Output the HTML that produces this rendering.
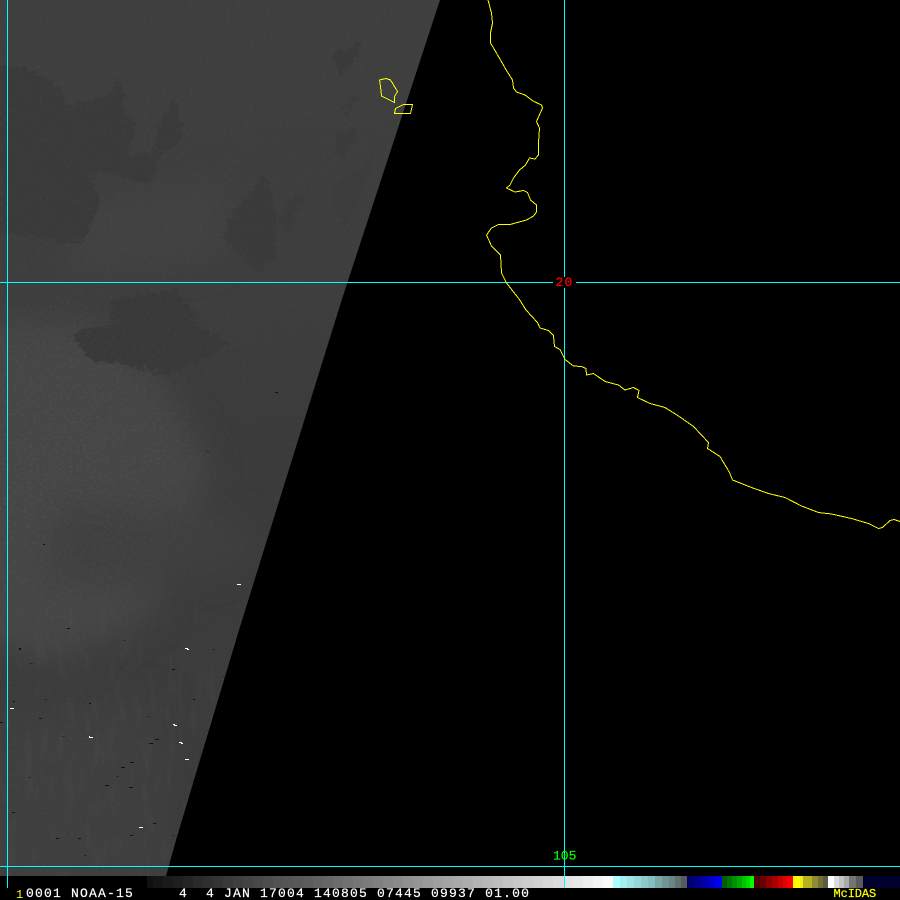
<!DOCTYPE html>
<html lang="en">
<head>
<meta charset="utf-8">
<title>NOAA-15 McIDAS image</title>
<style>
html,body{margin:0;padding:0;width:900px;height:900px;background:#000;overflow:hidden}
svg{display:block}
text{font-family:"Liberation Mono",monospace;white-space:pre}
</style>
</head>
<body>
<svg width="900" height="900" viewBox="0 0 900 900" xmlns="http://www.w3.org/2000/svg">
<defs>
<clipPath id="sw"><polygon points="0,0 440,0 341.7,300 239,630 176,840 166,876 0,876"/></clipPath>
<linearGradient id="base" x1="0" y1="0" x2="0" y2="1">
<stop offset="0" stop-color="#3f3f3f"/><stop offset=".3" stop-color="#3e3e3e"/><stop offset=".5" stop-color="#3b3b3b"/><stop offset="1" stop-color="#3c3c3c"/>
</linearGradient>
<linearGradient id="fadeY" x1="0" y1="0" x2="0" y2="1">
<stop offset="0" stop-color="#000"/><stop offset=".3" stop-color="#fff"/><stop offset="1" stop-color="#fff"/>
</linearGradient>
<radialGradient id="fadeR" cx=".25" cy=".5" r=".7">
<stop offset="0" stop-color="#fff"/><stop offset="1" stop-color="#000"/>
</radialGradient>
<mask id="mY" maskUnits="userSpaceOnUse" x="0" y="560" width="260" height="320"><rect x="0" y="560" width="260" height="320" fill="url(#fadeY)"/></mask>
<mask id="mR" maskUnits="userSpaceOnUse" x="0" y="280" width="280" height="360"><rect x="0" y="280" width="280" height="360" fill="url(#fadeR)"/></mask>
<filter id="rough" x="-5%" y="-5%" width="110%" height="110%" color-interpolation-filters="sRGB">
<feTurbulence type="fractalNoise" baseFrequency="0.14 0.22" numOctaves="3" seed="4" result="n"/>
<feDisplacementMap in="SourceGraphic" in2="n" scale="14" xChannelSelector="R" yChannelSelector="G"/>
</filter>
<filter id="soft" x="-20%" y="-20%" width="140%" height="140%" color-interpolation-filters="sRGB">
<feGaussianBlur stdDeviation="16"/>
</filter>
<filter id="grain" x="0" y="0" width="100%" height="100%" color-interpolation-filters="sRGB">
<feTurbulence type="fractalNoise" baseFrequency="0.3 0.38" numOctaves="2" seed="9"/>
<feColorMatrix type="matrix" values="0 0 0 0 1  0 0 0 0 1  0 0 0 0 1  1.6 0 0 0 -0.72"/>
</filter>
<filter id="streak" x="0" y="0" width="100%" height="100%" color-interpolation-filters="sRGB">
<feTurbulence type="fractalNoise" baseFrequency="0.12 0.03" numOctaves="2" seed="3"/>
<feColorMatrix type="matrix" values="0 0 0 0 1  0 0 0 0 1  0 0 0 0 1  1.8 0 0 0 -0.8"/>
</filter>
</defs>

<rect width="900" height="900" fill="#000"/>

<g clip-path="url(#sw)">
<rect width="460" height="880" fill="url(#base)"/>
<g filter="url(#soft)">
<polygon points="-40,320 90,320 170,390 210,470 150,620 60,660 -40,640" fill="#464646"/>
<polygon points="60,500 240,520 250,560 130,590 40,580" fill="#404040"/>
<polygon points="-40,720 160,700 170,900 -40,900" fill="#3f3f3f"/>
<polygon points="90,200 230,180 215,260 60,280" fill="#424242"/>
</g>
<g filter="url(#rough)">
<polygon points="0,65 30,70 50,80 70,105 110,95 118,78 125,95 122,115 137,115 128,155 152,155 160,120 176,95 183,140 160,155 150,185 120,175 90,172 100,200 85,240 60,243 20,235 0,230" fill="#3a3a3a"/>
<polygon points="240,205 265,175 276,205 276,255 260,272 225,240 228,220" fill="#3a3a3a"/>
<polygon points="285,205 305,190 292,232 278,225" fill="#3b3b3b"/>
<polygon points="333,55 362,42 355,62 340,75" fill="#3a3a3a"/>
<polygon points="340,108 360,95 352,112 340,112" fill="#3b3b3b"/>
<polygon points="338,130 358,128 345,160 335,155" fill="#3b3b3b"/>
<polygon points="335,185 375,155 345,232 335,205" fill="#3c3c3c"/>
<polygon points="110,300 175,290 200,320 110,320" fill="#393939"/>
<polygon points="70,335 130,318 190,320 230,345 170,375 125,365 90,360" fill="#393939"/>
</g>
<rect width="460" height="880" filter="url(#grain)" opacity=".03"/>
<g mask="url(#mY)"><rect y="560" width="260" height="320" filter="url(#streak)" opacity=".03"/></g>
<g mask="url(#mR)"><rect y="280" width="280" height="360" filter="url(#grain)" opacity=".05"/></g>
</g>

<g shape-rendering="crispEdges">
<!-- white specks -->
<g fill="#fff">
<rect x="185" y="648" width="3" height="1"/><rect x="187" y="649" width="2" height="1"/>
<rect x="237" y="584" width="4" height="1"/>
<rect x="10" y="708" width="4" height="1"/>
<rect x="89" y="736" width="1" height="2"/><rect x="89" y="737" width="4" height="1"/>
<rect x="173" y="724" width="2" height="1"/><rect x="174" y="725" width="3" height="1"/>
<rect x="179" y="742" width="3" height="1"/><rect x="181" y="743" width="2" height="1"/>
<rect x="185" y="759" width="4" height="1"/>
<rect x="139" y="827" width="4" height="1"/>
</g>
<!-- dark specks -->
<g fill="#111">
<rect x="67" y="628" width="3" height="1"/><rect x="19" y="648" width="2" height="2"/>
<rect x="172" y="669" width="3" height="1"/><rect x="193" y="699" width="2" height="1"/>
<rect x="13" y="701" width="2" height="1"/><rect x="89" y="703" width="2" height="1"/>
<rect x="39" y="718" width="3" height="1"/><rect x="155" y="739" width="4" height="1"/>
<rect x="149" y="743" width="4" height="1"/><rect x="130" y="762" width="4" height="1"/>
<rect x="121" y="767" width="4" height="1"/><rect x="105" y="785" width="4" height="1"/>
<rect x="129" y="787" width="4" height="1"/><rect x="12" y="812" width="3" height="1"/>
<rect x="153" y="823" width="3" height="1"/><rect x="130" y="835" width="3" height="1"/>
<rect x="56" y="838" width="3" height="1"/><rect x="78" y="838" width="3" height="1"/>
<rect x="275" y="392" width="3" height="1"/><rect x="68" y="628" width="2" height="1"/>
<rect x="0" y="722" width="3" height="1"/><rect x="43" y="544" width="2" height="1"/>
</g>
<g fill="#2a2a2a">
<rect x="29" y="663" width="4" height="1"/><rect x="123" y="640" width="3" height="1"/>
<rect x="212" y="649" width="3" height="1"/><rect x="222" y="676" width="3" height="1"/>
<rect x="44" y="699" width="3" height="1"/><rect x="62" y="736" width="3" height="1"/>
<rect x="147" y="716" width="3" height="1"/><rect x="28" y="777" width="3" height="1"/>
<rect x="116" y="776" width="3" height="1"/><rect x="191" y="780" width="3" height="1"/>
<rect x="172" y="835" width="3" height="1"/><rect x="84" y="855" width="3" height="1"/>
<rect x="206" y="451" width="3" height="1"/>
</g>

<!-- graticule -->
<g fill="#00ffff">
<rect x="7" y="0" width="1" height="888"/>
<rect x="564" y="0" width="1" height="277"/>
<rect x="564" y="288" width="1" height="600"/>
<rect x="0" y="282" width="553" height="1"/>
<rect x="576" y="282" width="324" height="1"/>
<rect x="0" y="866" width="900" height="1"/>
</g>

<!-- colour bar: greys -->
<g>
<rect x="147" y="876" width="6" height="12" fill="#101010"/><rect x="153" y="876" width="10" height="12" fill="#151515"/><rect x="163" y="876" width="10" height="12" fill="#1a1a1a"/><rect x="173" y="876" width="10" height="12" fill="#1f1f1f"/><rect x="183" y="876" width="10" height="12" fill="#242424"/><rect x="193" y="876" width="10" height="12" fill="#2a2a2a"/><rect x="203" y="876" width="10" height="12" fill="#2f2f2f"/><rect x="213" y="876" width="10" height="12" fill="#343434"/><rect x="223" y="876" width="10" height="12" fill="#393939"/><rect x="233" y="876" width="10" height="12" fill="#3e3e3e"/><rect x="243" y="876" width="10" height="12" fill="#434343"/><rect x="253" y="876" width="10" height="12" fill="#484848"/><rect x="263" y="876" width="10" height="12" fill="#4d4d4d"/><rect x="273" y="876" width="10" height="12" fill="#525252"/><rect x="283" y="876" width="10" height="12" fill="#555"/><rect x="293" y="876" width="10" height="12" fill="#585858"/><rect x="303" y="876" width="10" height="12" fill="#5c5c5c"/><rect x="313" y="876" width="10" height="12" fill="#616161"/><rect x="323" y="876" width="10" height="12" fill="#666"/><rect x="333" y="876" width="10" height="12" fill="#6c6c6c"/><rect x="343" y="876" width="10" height="12" fill="#717171"/><rect x="353" y="876" width="10" height="12" fill="#767676"/><rect x="363" y="876" width="10" height="12" fill="#7b7b7b"/><rect x="373" y="876" width="10" height="12" fill="#808080"/><rect x="383" y="876" width="10" height="12" fill="#858585"/><rect x="393" y="876" width="10" height="12" fill="#8a8a8a"/><rect x="403" y="876" width="10" height="12" fill="#909090"/><rect x="413" y="876" width="10" height="12" fill="#959595"/><rect x="423" y="876" width="10" height="12" fill="#9a9a9a"/><rect x="433" y="876" width="10" height="12" fill="#9f9f9f"/><rect x="443" y="876" width="10" height="12" fill="#a4a4a4"/><rect x="453" y="876" width="10" height="12" fill="#a9a9a9"/><rect x="463" y="876" width="10" height="12" fill="#aeaeae"/><rect x="473" y="876" width="10" height="12" fill="#b3b3b3"/><rect x="483" y="876" width="10" height="12" fill="#b8b8b8"/><rect x="493" y="876" width="10" height="12" fill="#bdbdbd"/><rect x="503" y="876" width="10" height="12" fill="#c3c3c3"/><rect x="513" y="876" width="10" height="12" fill="#c8c8c8"/><rect x="523" y="876" width="10" height="12" fill="#cdcdcd"/><rect x="533" y="876" width="10" height="12" fill="#d2d2d2"/><rect x="543" y="876" width="10" height="12" fill="#d7d7d7"/><rect x="553" y="876" width="11" height="12" fill="#dcdcdc"/><rect x="565" y="876" width="8" height="12" fill="#e4e4e4"/><rect x="573" y="876" width="10" height="12" fill="#e8e8e8"/><rect x="583" y="876" width="10" height="12" fill="#eeeeee"/><rect x="593" y="876" width="10" height="12" fill="#f4f4f4"/><rect x="603" y="876" width="10" height="12" fill="#fafafa"/>
</g>
<!-- cyan ramp -->
<g>
<rect x="613" y="876" width="7" height="12" fill="#aaffff"/><rect x="620" y="876" width="7" height="12" fill="#a4f0f0"/><rect x="627" y="876" width="7" height="12" fill="#9ee4e4"/><rect x="634" y="876" width="7" height="12" fill="#96d8d8"/><rect x="641" y="876" width="7" height="12" fill="#8ccaca"/><rect x="648" y="876" width="7" height="12" fill="#84bebe"/><rect x="655" y="876" width="7" height="12" fill="#7aa8a8"/><rect x="662" y="876" width="7" height="12" fill="#6f9595"/><rect x="669" y="876" width="6" height="12" fill="#688686"/><rect x="675" y="876" width="6" height="12" fill="#5f7272"/><rect x="681" y="876" width="6" height="12" fill="#565c5c"/>
</g>
<!-- blue -->
<g>
<rect x="687" y="876" width="7" height="12" fill="#000070"/><rect x="694" y="876" width="7" height="12" fill="#000088"/><rect x="701" y="876" width="7" height="12" fill="#0000a4"/><rect x="708" y="876" width="7" height="12" fill="#0000c8"/><rect x="715" y="876" width="7" height="12" fill="#0000f0"/>
</g>
<!-- green -->
<g>
<rect x="722" y="876" width="5" height="12" fill="#006000"/><rect x="727" y="876" width="5" height="12" fill="#007800"/><rect x="732" y="876" width="5" height="12" fill="#009000"/><rect x="737" y="876" width="5" height="12" fill="#00a800"/><rect x="742" y="876" width="4" height="12" fill="#00c400"/><rect x="746" y="876" width="4" height="12" fill="#00dc00"/><rect x="750" y="876" width="4" height="12" fill="#00ff00"/>
</g>
<!-- red -->
<g>
<rect x="754" y="876" width="6" height="12" fill="#500000"/><rect x="760" y="876" width="6" height="12" fill="#680000"/><rect x="766" y="876" width="6" height="12" fill="#880000"/><rect x="772" y="876" width="6" height="12" fill="#a80000"/><rect x="778" y="876" width="5" height="12" fill="#c80000"/><rect x="783" y="876" width="5" height="12" fill="#e40000"/><rect x="788" y="876" width="5" height="12" fill="#ff0000"/>
</g>
<!-- yellow -->
<g>
<rect x="793" y="876" width="7" height="12" fill="#ffff00"/><rect x="800" y="876" width="3" height="12" fill="#eeee10"/><rect x="803" y="876" width="9" height="12" fill="#b8b020"/><rect x="812" y="876" width="6" height="12" fill="#908c30"/><rect x="818" y="876" width="5" height="12" fill="#747038"/><rect x="823" y="876" width="5" height="12" fill="#5c5c40"/>
</g>
<!-- white ramp -->
<g>
<rect x="828" y="876" width="6" height="12" fill="#fff"/><rect x="834" y="876" width="5" height="12" fill="#dcdcdc"/><rect x="839" y="876" width="5" height="12" fill="#c4c4c4"/><rect x="844" y="876" width="5" height="12" fill="#aaa"/><rect x="849" y="876" width="7" height="12" fill="#747474"/><rect x="856" y="876" width="7" height="12" fill="#5a5a5a"/>
</g>
<rect x="863" y="876" width="37" height="12" fill="#00002c"/>
<rect x="564" y="876" width="1" height="12" fill="#00ffff"/>
</g>

<!-- coastline -->
<polyline fill="none" stroke="#ffff00" stroke-width="1" shape-rendering="crispEdges" points="488,0 491.5,13 492.5,23 490.5,33 490.5,43 493.5,48 500.5,60 506.5,70.5 512.5,80 513.5,88 516.5,92 525,95 533,101 541.5,105 542.5,108 536.5,121.5 539.5,128 538.5,143 538.5,155 535,159 529.5,158 525.5,165 519.5,170 513.5,178 510,185 506.5,188 515,192 523.5,190.5 527.5,192.5 530.5,200 536.5,205 536.5,212 533.5,216 526.5,220 510,224.5 498.5,224.5 491.5,228 486.5,235 491.5,246 500.5,255 501.5,273 506.5,283 519.5,299.5 526,310 537.5,322.5 540,328 548.5,330.5 553.5,335.5 554.5,346.5 560,349.5 565,359.5 573.5,366 581.5,366.5 586,368.5 586.5,375 593.5,373.5 605,381.5 618.5,385 625,390 633.5,387.5 639,390.5 637.5,397.5 650,403.5 665,407.5 678.5,416 693.5,426.5 708.5,442.5 707.5,448.5 720,456.5 729.5,472.5 732.5,480 751.5,487.5 768.5,493.5 785,497.5 801.5,506 818.5,512.5 831.5,514 851.5,518.5 868.5,523.5 878.5,528.5 882.5,527.5 890,520.5 894,519.5 900,521.5"/>
<polygon fill="none" stroke="#ffff00" stroke-width="1" shape-rendering="crispEdges" points="379.5,80 386,78.5 390.5,80 397.5,91.5 394.5,96.5 394.5,102.5 381.5,96 380.5,86.5"/>
<polygon fill="none" stroke="#ffff00" stroke-width="1" shape-rendering="crispEdges" points="394.5,113.5 395.5,108.5 403.5,104.5 412.5,104.5 410.5,113.5"/>

<!-- labels -->
<text x="555.5" y="286" font-size="13" letter-spacing="1.2" fill="#ff0000" stroke="#ff0000" stroke-width=".25">20</text>
<text x="553" y="859.5" font-size="13" letter-spacing="0" fill="#00ff00" stroke="#00ff00" stroke-width=".2">105</text>
<text x="16" y="898" font-size="12" fill="#ffff00">1</text>
<text x="26" y="897" font-size="13" letter-spacing="1.2" fill="#ffffff" stroke="#ffffff" stroke-width=".2" xml:space="preserve">0001 NOAA-15     4  4 JAN 17004 140805 07445 09937 01.00</text>
<text x="833.5" y="897" font-size="12" letter-spacing="-0.1" fill="#ffff00" stroke="#ffff00" stroke-width=".2">McIDAS</text>
</svg>
</body>
</html>
